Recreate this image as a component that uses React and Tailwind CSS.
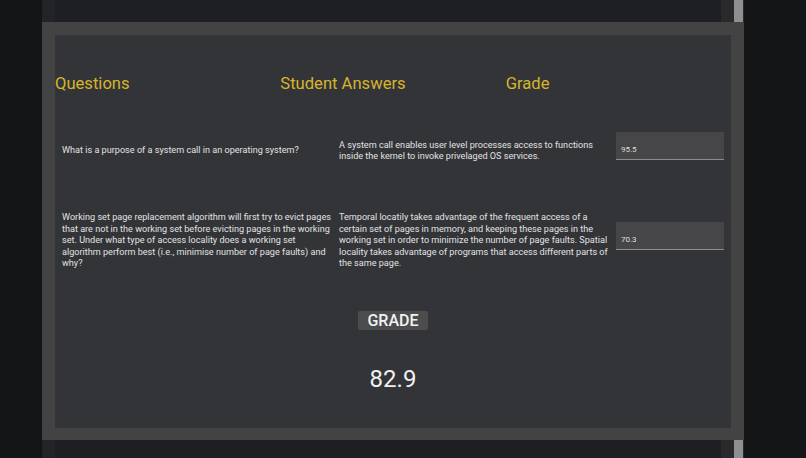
import React, { useState } from 'react';

const rows = [
  {
    id: 1,
    question: 'What is a purpose of a system call in an operating system?',
    answer:
      'A system call enables user level processes access to functions inside the kernel to invoke privelaged OS services.',
    grade: '95.5',
    height: 'h-[82px]',
  },
  {
    id: 2,
    question:
      'Working set page replacement algorithm will first try to evict pages that are not in the working set before evicting pages in the working set. Under what type of access locality does a working set algorithm perform best (i.e., minimise number of page faults) and why?',
    answer:
      'Temporal locatily takes advantage of the frequent access of a certain set of pages in memory, and keeping these pages in the working set in order to minimize the number of page faults. Spatial locality takes advantage of programs that access different parts of the same page.',
    grade: '70.3',
    height: 'h-[98px]',
  },
];

const GradeRow = ({ row, value, onChange }) => {
  return (
    <div className={`grid grid-cols-[277px_277px_122px] items-center ${row.height}`}>
      <p className="pl-[7px] -mr-[4px] text-[9.1px] leading-[11.5px] text-[#e2e2e2]">{row.question}</p>
      <p className="pl-[7px] -mr-[4px] text-[9.1px] leading-[11.5px] text-[#e2e2e2]">{row.answer}</p>
      <div className="pl-[7px] pr-[7px] pb-[11px]">
        <input
          value={value}
          onChange={(e) => onChange(row.id, e.target.value)}
          className="block w-full h-[28px] bg-[#464649] border-b border-[#8d8d8d] px-[5px] pt-[8px] text-[8px] text-[#dedede] outline-none"
        />
      </div>
    </div>
  );
};

const App = () => {
  const [grades, setGrades] = useState({ 1: '95.5', 2: '70.3' });

  const handleChange = (id, v) => {
    setGrades({ ...grades, [id]: v });
  };

  return (
    <div
      className="relative w-[806px] h-[458px] overflow-hidden bg-[#141516]"
      style={{ fontFamily: 'Roboto, "Liberation Sans", sans-serif' }}
    >
      {/* page behind the modal */}
      <div className="ml-[42px] w-[702px] h-full flex">
        <div className="w-[13px] bg-[#232427]" />
        <div className="flex-1 bg-[#1e1f22]" />
        <div className="w-[12px] bg-[#2a2a2c]" />
        <div className="w-[11px] bg-[#2a2a2c] pl-px">
          <div className="w-[9px] h-full bg-[#8f8f8f]" />
        </div>
      </div>

      {/* modal */}
      <div className="absolute left-[42px] top-[22px] w-[702px] h-[418px] bg-[#434343] px-[13px] pt-[13px] pb-[12px]">
        <div className="h-full bg-[#333438]">
          <div className="grid grid-cols-3 pt-[39px] text-[16.6px] leading-[20px] text-[#d6b52c]">
            <div>Questions</div>
            <div>Student Answers</div>
            <div>Grade</div>
          </div>

          <div className="mt-[16px]">
            {rows.map((row) => (
              <GradeRow key={row.id} row={row} value={grades[row.id]} onChange={handleChange} />
            ))}
          </div>

          <div className="flex flex-col items-center">
            <button className="mt-[21px] h-[19px] w-[70px] rounded-[2px] bg-[#4c4c4e] text-[16px] leading-[19px] font-medium text-[#f2f2f2]">
              GRADE
            </button>
            <div className="mt-[35px] text-[24px] leading-[28px] text-[#f0f0f0]">82.9</div>
          </div>
        </div>
      </div>
    </div>
  );
};

export default App;
